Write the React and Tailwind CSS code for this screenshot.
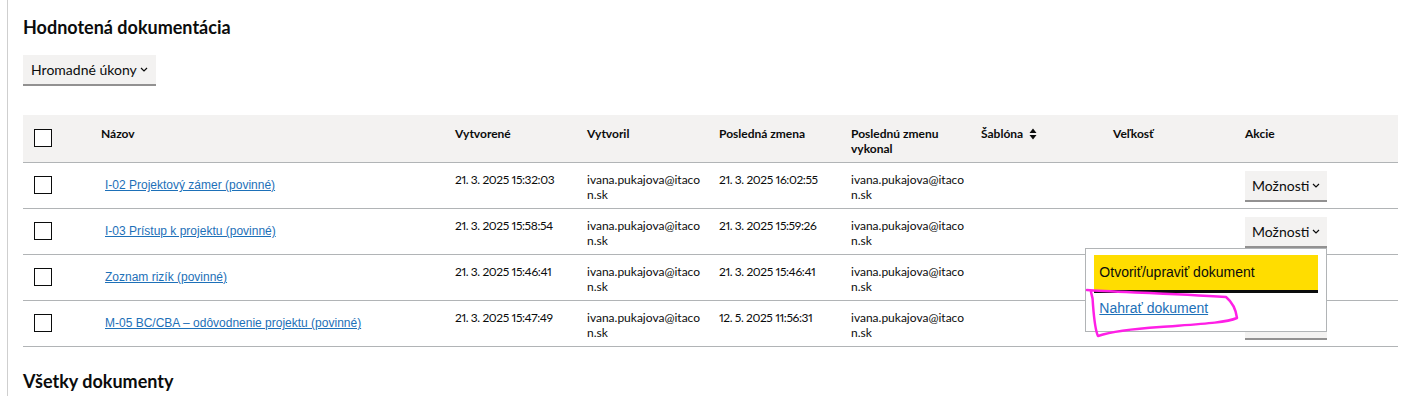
import React from "react";

const rows = [
  {
    name: "I-02 Projektový zámer (povinné)",
    created: "21. 3. 2025 15:32:03",
    changed: "21. 3. 2025 16:02:55",
  },
  {
    name: "I-03 Prístup k projektu (povinné)",
    created: "21. 3. 2025 15:58:54",
    changed: "21. 3. 2025 15:59:26",
    open: true,
  },
  {
    name: "Zoznam rizík (povinné)",
    created: "21. 3. 2025 15:46:41",
    changed: "21. 3. 2025 15:46:41",
  },
  {
    name: "M-05 BC/CBA – odôvodnenie projektu (povinné)",
    created: "21. 3. 2025 15:47:49",
    changed: "12. 5. 2025 11:56:31",
  },
];

const sans = "font-['Lato','Noto_Sans',sans-serif]";
const arial = "font-['Liberation_Sans',Arial,sans-serif]";

const Chevron = () => (
  <svg width="8" height="5" viewBox="0 0 8 5" className="ml-[3px] inline-block">
    <path d="M1 1l3 3 3-3" fill="none" stroke="#0b0c0c" strokeWidth="1.2" />
  </svg>
);

const Checkbox = () => (
  <span className="block w-[18px] h-[18px] border border-[#0b0c0c] bg-white" />
);

const GrayButton = ({ children, className = "" }) => (
  <button
    className={`inline-flex items-center bg-[#f3f2f1] border-b-2 border-[#929191] text-[14px] text-[#0b0c0c] ${sans} ${className}`}
  >
    {children}
    <Chevron />
  </button>
);

const Email = () => (
  <span>
    ivana.pukajova@itaco
    <br />
    n.sk
  </span>
);

const ActionsMenu = () => (
  <div className="absolute right-0 top-full z-10 w-[242px] h-[84px] bg-white border border-[#b1b4b6] px-[8px] pt-[6px]">
    <div className={`bg-[#ffdd00] border-b-[3px] border-[#0b0c0c] h-[38px] flex items-center pl-[5px] pt-[1px] text-[14px] text-[#0b0c0c] ${arial}`}>
      Otvoriť/upraviť dokument
    </div>
    <a href="#" className={`block mt-[8px] pl-[5px] text-[14px] text-[#1d70b8] underline ${arial}`}>
      Nahrať dokument
    </a>
  </div>
);

export default function App() {
  return (
    <div className="w-[1412px] h-[396px] bg-white overflow-hidden relative">
      <div className={`ml-[7px] h-full border-l border-[#cfcfcf] pl-[15px] pr-[14px] pt-[15px] text-[#0b0c0c] ${sans}`}>
        <h2 className="text-[18px] font-bold leading-[24px]">Hodnotená dokumentácia</h2>

        <GrayButton className="mt-[16px] h-[31px] px-[8px]">Hromadné úkony</GrayButton>

        {/* Table */}
        <table className="mt-[29px] w-full table-fixed border-collapse">
          <colgroup>
            <col className="w-[68px]" />
            <col className="w-[354px]" />
            <col className="w-[132px]" />
            <col className="w-[132px]" />
            <col className="w-[132px]" />
            <col className="w-[130px]" />
            <col className="w-[132px]" />
            <col className="w-[132px]" />
            <col />
          </colgroup>
          <thead>
            <tr className="bg-[#f3f2f1] border-b border-[#b1b4b6] h-[47px] text-[12px] font-bold text-left align-top leading-[15px]">
              <th className="pl-[11px] pt-[14px]">
                <Checkbox />
              </th>
              <th className="pl-[10px] pt-[11px]">Názov</th>
              <th className="pl-[10px] pt-[11px]">Vytvorené</th>
              <th className="pl-[10px] pt-[11px]">Vytvoril</th>
              <th className="pl-[10px] pt-[11px]">Posledná zmena</th>
              <th className="pl-[10px] pt-[11px]">
                Poslednú zmenu
                <br />
                vykonal
              </th>
              <th className="pl-[10px] pt-[11px]">
                <span className="inline-flex items-center">
                  Šablóna
                  <svg width="8" height="12" viewBox="0 0 8 12" className="ml-[6px]">
                    <path d="M4 0.5L7.5 5H0.5z M4 11.5L0.5 7H7.5z" fill="#0b0c0c" />
                  </svg>
                </span>
              </th>
              <th className="pl-[10px] pt-[11px]">Veľkosť</th>
              <th className="pl-[10px] pt-[11px]">Akcie</th>
            </tr>
          </thead>
          <tbody>
            {rows.map((r) => (
              <tr key={r.name} className="border-b border-[#b1b4b6] h-[46px] text-[12px] leading-[15px]">
                <td className="pl-[11px] align-middle">
                  <Checkbox />
                </td>
                <td className="pl-[14px] align-middle">
                  <a href="#" className={`text-[#1d70b8] underline ${arial}`}>
                    {r.name}
                  </a>
                </td>
                <td className="pl-[10px] pt-[9px] align-top proportional-nums tracking-[-0.4px]">{r.created}</td>
                <td className="pl-[10px] pt-[9px] align-top">
                  <Email />
                </td>
                <td className="pl-[10px] pt-[9px] align-top proportional-nums tracking-[-0.4px]">{r.changed}</td>
                <td className="pl-[10px] pt-[9px] align-top">
                  <Email />
                </td>
                <td />
                <td />
                <td className="pl-[10px] pt-[8px] align-top">
                  <div className="relative inline-block">
                    <GrayButton className="h-[31px] px-[7px]">Možnosti</GrayButton>
                    {r.open && <ActionsMenu />}
                  </div>
                </td>
              </tr>
            ))}
          </tbody>
        </table>

        <h2 className="mt-[22px] text-[18px] font-bold leading-[24px]">Všetky dokumenty</h2>
      </div>

      {/* hand-drawn marker around the upload link */}
      <svg className="absolute left-0 top-0 z-20 pointer-events-none" width="1412" height="396">
        <path
          d="M1087 290 C1110 292 1170 293 1226 297 C1232 302 1236 310 1237 318 C1225 323 1200 324 1160 327 C1130 329 1110 332 1098 336 C1095 330 1094 318 1093 305 C1093 299 1092 295 1091 292"
          fill="none"
          stroke="#ff1fe6"
          strokeWidth="2.5"
          strokeLinecap="round"
          strokeLinejoin="round"
        />
      </svg>
    </div>
  );
}
